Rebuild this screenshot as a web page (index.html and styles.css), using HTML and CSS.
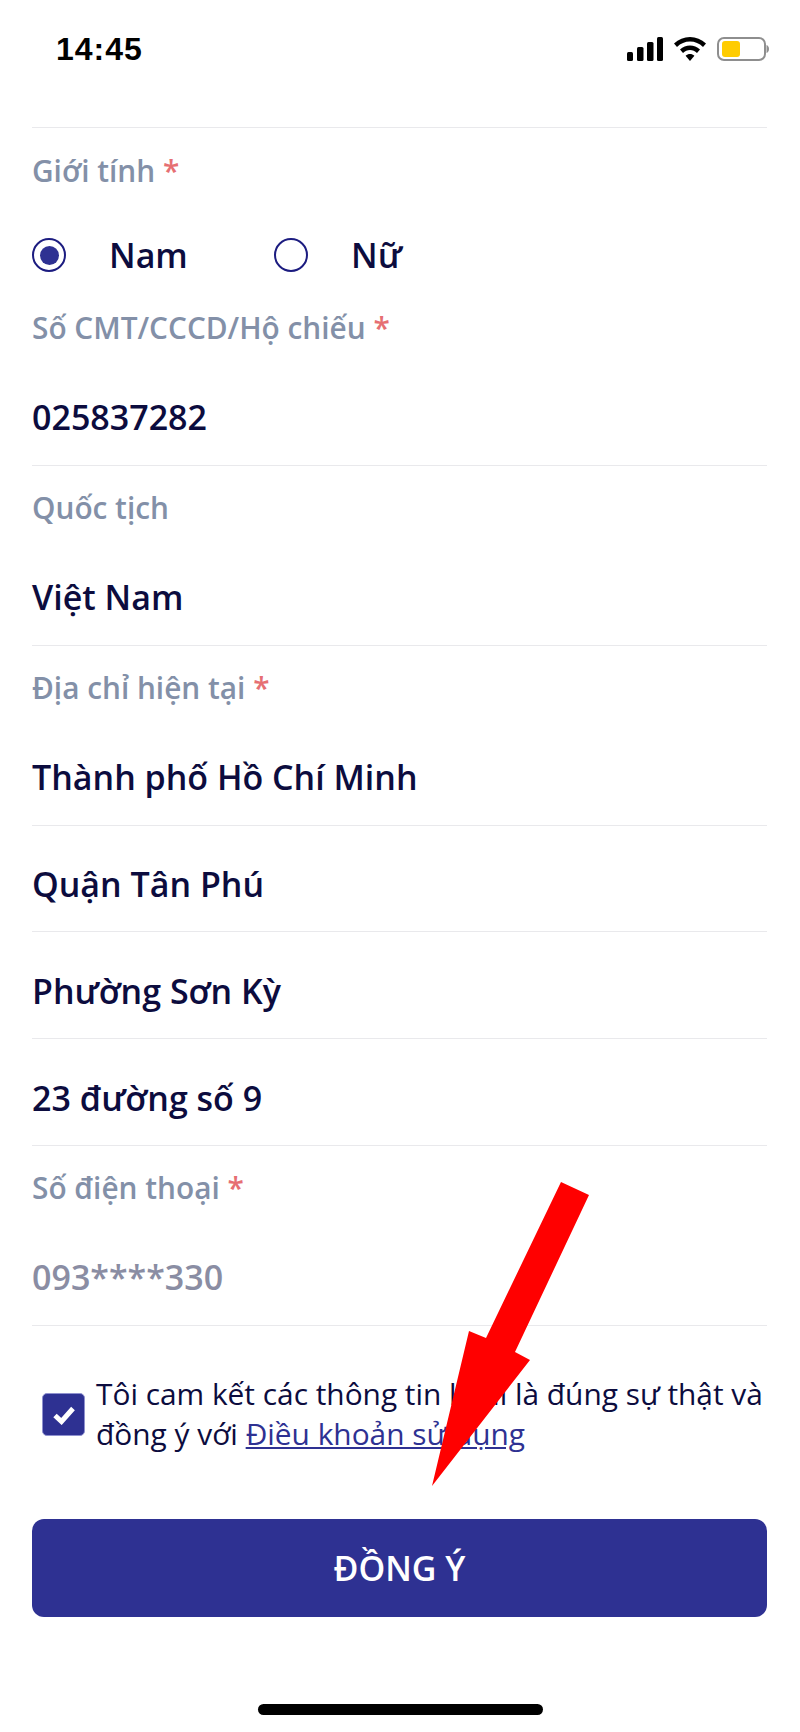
FILE: index.html
```html
<!DOCTYPE html>
<html lang="vi">
<head>
<meta charset="utf-8">
<title>Thông tin</title>
<link rel="stylesheet" href="styles.css">
</head>
<body>
<div class="page">
  <header class="status">
    <span class="time">14:45</span>
    <div class="status-icons">
      <svg class="signal" width="36" height="24" viewBox="0 0 36 24"><rect x="0" y="15" width="6" height="9" rx="1.5"/><rect x="10" y="10" width="6.5" height="14" rx="1.5"/><rect x="20" y="5" width="6.5" height="19" rx="1.5"/><rect x="30" y="0" width="6" height="24" rx="1.5"/></svg>
      <svg class="wifi" width="32" height="24" viewBox="0 0 32 24"><path d="M16 0C10 0 4.500 2.300 0 6.500L3 10C6.600 6.600 11.100 4.600 16 4.600S25.400 6.600 29 10L32 6.500C27.500 2.300 22 0 16 0Z"/><path d="M16 8.500C12.300 8.500 8.900 9.900 6 12.500L9 16C11 14.200 13.400 13.100 16 13.100S21 14.200 23 16L26 12.500C23.100 9.900 19.700 8.500 16 8.500Z"/><path d="M16 17C14.400 17 12.900 17.600 11.600 18.700L16 24L20.400 18.700C19.100 17.600 17.600 17 16 17Z"/></svg>
      <svg class="battery" width="52" height="24" viewBox="0 0 52 24"><rect x="1" y="1" width="47" height="22" rx="6" fill="#fff" stroke="#8e8e8e" stroke-width="2"/><rect x="5" y="4" width="18" height="16" rx="3" fill="#ffcc00"/><path d="M49.500 8C51 8.500 52 10 52 12S51 15.500 49.500 16Z" fill="#8e8e8e"/></svg>
    </div>
  </header>

  <main class="form">
    <section class="field field-gender">
      <div class="label">Giới tính <span class="req">*</span></div>
      <div class="radios">
        <div class="radio-item item-nam"><span class="radio on"><span class="dot"></span></span><span class="radio-text">Nam</span></div>
        <div class="radio-item"><span class="radio"></span><span class="radio-text">Nữ</span></div>
      </div>
    </section>
    <section class="field no-line">
      <div class="label">Số CMT/CCCD/Hộ chiếu <span class="req">*</span></div>
      <div class="value">025837282</div>
    </section>
    <section class="field">
      <div class="label">Quốc tịch</div>
      <div class="value">Việt Nam</div>
    </section>
    <section class="field">
      <div class="label">Địa chỉ hiện tại <span class="req">*</span></div>
      <div class="value">Thành phố Hồ Chí Minh</div>
    </section>
    <section class="field"><div class="value tight">Quận Tân Phú</div></section>
    <section class="field"><div class="value">Phường Sơn Kỳ</div></section>
    <section class="field"><div class="value">23 đường số 9</div></section>
    <section class="field">
      <div class="label">Số điện thoại <span class="req">*</span></div>
      <div class="value muted">093****330</div>
    </section>

    <div class="agree">
      <span class="checkbox">
        <svg width="24" height="20" viewBox="0 0 24 20"><path d="M3 10.500L9.500 16.500L21 3.500" fill="none" stroke="#fff" stroke-width="5"/></svg>
      </span>
      <p class="agree-text">Tôi cam kết các thông tin khai là đúng sự thật và đồng ý với <a href="#">Điều khoản sử dụng</a></p>
    </div>

    <button class="submit" type="button">ĐỒNG Ý</button>
  </main>

  <div class="home-bar"></div>

  <svg class="arrow" width="800" height="1732" viewBox="0 0 800 1732"><polygon points="561,1182 589,1195 515,1352 530,1360 432,1486 469,1331 486,1338" fill="#ff0000"/></svg>
</div>
</body>
</html>
```
FILE: styles.css
```css
* { box-sizing: border-box; }
html, body { margin: 0; padding: 0; background: #fff; }
body { font-family: "Open Sans", "Noto Sans", sans-serif; color: #0c0c3e; }
.page { position: relative; width: 800px; height: 1732px; overflow: hidden; }

.status { height: 96px; padding: 0 31px 0 56px; display: flex; align-items: flex-start; justify-content: space-between; }
.time { margin-top: 31px; font-family: "Liberation Sans", sans-serif; font-weight: 700; font-size: 32px; line-height: 36px; color: #000; letter-spacing: 1px; }
.status-icons { margin-top: 37px; display: flex; align-items: center; gap: 11px; }
.status-icons svg { display: block; fill: #000; }

.form { padding: 0 33px 0 32px; }
.field { border-top: 1px solid #e9e9ec; }
.field.no-line { border-top: 0; }
.form > .field:first-child { margin-top: 31px; }
.label { height: 72px; padding-top: 22px; font-size: 29.800px; line-height: 40px; font-weight: 600; color: #8390a8; }
.req { color: #e66f73; }
.value { height: 106px; padding-top: 37px; font-size: 34px; line-height: 44px; font-weight: 600; color: #0c0c3e; }
.value.tight { height: 105px; padding-top: 36px; }
.label + .value { height: 107px; padding-top: 37px; }
.value.muted { color: #8a8da3; font-weight: 600; }

.field-gender { height: 159px; }
.field-gender .label { padding-top: 23px; }
.radios { height: 86px; display: flex; align-items: flex-start; padding-top: 38px; }
.radio-item { display: flex; align-items: center; height: 34px; }
.item-nam { width: 242px; }
.radio { width: 34px; height: 34px; border: 2px solid #1c1c80; border-radius: 50%; display: flex; align-items: center; justify-content: center; }
.dot { width: 19px; height: 19px; border-radius: 50%; background: #2e3192; }
.radio-text { margin-left: 43px; font-size: 34px; line-height: 44px; font-weight: 600; color: #0c0c3e; }

.agree { border-top: 1px solid #e9e9ec; height: 194px; padding: 48px 0 0 10px; display: flex; align-items: flex-start; }
.checkbox { flex: none; width: 43px; height: 43px; margin-top: 19px; border-radius: 5px; background: #2e3192; border: 1px solid #8f91cf; display: flex; align-items: center; justify-content: center; }
.agree-text { margin: 0 0 0 11px; font-size: 29.850px; line-height: 40px; font-weight: 400; color: #0c0c3e; }
.agree-text a { color: #2e3192; text-decoration: underline; }

.submit { display: block; width: 735px; height: 98px; border: 0; border-radius: 12px; background: #2e3192; color: #fff; font-family: inherit; font-size: 34px; font-weight: 600; }

.home-bar { position: absolute; left: 258px; top: 1704px; width: 285px; height: 11px; border-radius: 6px; background: #000; }
.arrow { position: absolute; left: 0; top: 0; pointer-events: none; }
```
